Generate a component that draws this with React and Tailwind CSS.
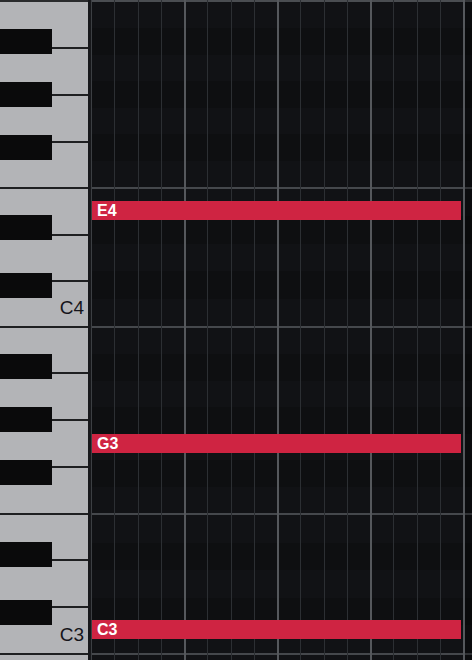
import React from 'react';

// white keys per octave, top to bottom: B A G F | E D C
const OCTAVES = [
    { heights: [47, 47, 47, 46, 47, 46, 46], label: 'C4' },
    { heights: [46, 47, 47, 47, 46, 47, 47], label: 'C3' },
];

const BLACK_KEYS = [29, 82, 135, 215, 273, 354, 407, 460, 542, 600];

// grid row groups (height incl. 2px bottom line) with black-key row pattern
const GROUPS = [
    { h: 187, rows: [0, 1, 0, 1, 0, 1, 0] },
    { h: 139, rows: [0, 1, 0, 1, 0] },
    { h: 187, rows: [0, 1, 0, 1, 0, 1, 0] },
    { h: 140, rows: [0, 1, 0, 1, 0] },
];

const NOTES = [
    { name: 'E4', top: 201 },
    { name: 'G3', top: 434 },
    { name: 'C3', top: 620 },
];

function Keyboard() {
    return (
        <div className="relative flex flex-col w-[91px] h-full border-r-[3px] border-[#17181b] bg-[#b3b4b7]">
            <div className="h-[2px] shrink-0 bg-[#2a2b2d]" />
            {OCTAVES.map((oct) =>
                oct.heights.map((h, i) => (
                    <div
                        key={oct.label + i}
                        className="shrink-0 flex items-end justify-end pr-[4px] pb-[9px] border-b-2 border-[#1e1f21] bg-[#b3b4b7]"
                        style={{ height: h }}
                    >
                        {i === 6 && (
                            <span className="text-[19px] leading-none text-[#15151b] font-['Liberation_Sans',Arial,sans-serif]">
                                {oct.label}
                            </span>
                        )}
                    </div>
                ))
            )}
            <div className="flex-1 bg-[#b3b4b7]" />

            {/* black keys sit over the white ones */}
            {BLACK_KEYS.map((top) => (
                <div
                    key={top}
                    className="absolute left-0 w-[52px] h-[25px] bg-[#0a0a0b]"
                    style={{ top }}
                />
            ))}
        </div>
    );
}

function Grid() {
    return (
        <div className="relative flex-1 flex flex-col h-full bg-[#0f1012]">
            <div className="h-[2px] shrink-0 bg-[#4a4d51]" />
            {GROUPS.map((g, gi) => (
                <div
                    key={gi}
                    className="shrink-0 flex flex-col border-b-2 border-[#45484c]"
                    style={{ height: g.h }}
                >
                    {g.rows.map((black, ri) => (
                        <div
                            key={ri}
                            className={black ? 'flex-1 bg-[#0e0f11]' : 'flex-1 bg-[#111215]'}
                        />
                    ))}
                </div>
            ))}
            <div className="flex-1 bg-[#111215]" />

            {/* beat / sixteenth lines */}
            <div className="absolute inset-0 flex pointer-events-none">
                {Array.from({ length: 16 }).map((_, i) => (
                    <div
                        key={i}
                        className={
                            i === 0
                                ? 'w-[23.25px] shrink-0 border-l border-[#3c3f43]'
                                : i % 4 === 0
                                ? 'w-[23.25px] shrink-0 border-l-2 border-[#55585c]'
                                : 'w-[23.25px] shrink-0 border-l border-[#2c2f33]'
                        }
                    />
                ))}
                <div className="flex-1 border-l-2 border-[#55585c] bg-black/30" />
            </div>

            {/* notes */}
            {NOTES.map((n) => (
                <div
                    key={n.name}
                    className="absolute left-[1px] w-[369px] h-[19px] flex items-center pl-[5px] bg-[#cf2442]"
                    style={{ top: n.top }}
                >
                    <span className="text-[16px] leading-none font-bold text-white font-['Liberation_Sans',Arial,sans-serif]">
                        {n.name}
                    </span>
                </div>
            ))}
        </div>
    );
}

export default function App() {
    return (
        <div className="flex w-[472px] h-[660px] overflow-hidden bg-[#0f1012]">
            <Keyboard />
            <Grid />
        </div>
    );
}
